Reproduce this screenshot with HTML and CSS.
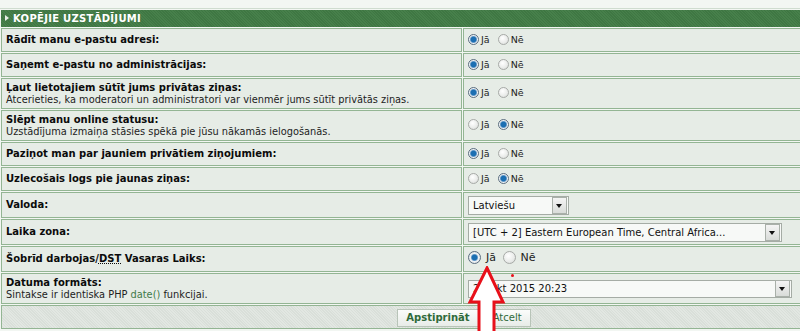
FILE: index.html
```html
<!DOCTYPE html>
<html lang="lv">

<head>
    <meta charset="UTF-8">
    <meta name="viewport" content="width=device-width, initial-scale=1.0">
    <title>Kopējie uzstādījumi</title>
    <link rel="stylesheet" href="styles.css">
</head>

<body>
    <div class="panel">
        <table class="prefs">
            <tr>
                <th colspan="2" class="head"><span class="tri"></span>Kopējie uzstādījumi</th>
            </tr>
            <tr class="row">
                <td class="lbl"><b>Rādīt manu e-pastu adresi:</b></td>
                <td class="val">
                    <label class="opt"><input type="radio" name="viewemail" checked>Jā</label>
                    <label class="opt"><input type="radio" name="viewemail">Nē</label>
                </td>
            </tr>
            <tr class="row">
                <td class="lbl"><b>Saņemt e-pastu no administrācijas:</b></td>
                <td class="val">
                    <label class="opt"><input type="radio" name="massemail" checked>Jā</label>
                    <label class="opt"><input type="radio" name="massemail">Nē</label>
                </td>
            </tr>
            <tr class="row tall">
                <td class="lbl"><b>Ļaut lietotajiem sūtīt jums privātas ziņas:</b><br>
                    <span class="hint">Atcerieties, ka moderatori un administratori var vienmēr jums sūtīt privātās ziņas.</span>
                </td>
                <td class="val">
                    <label class="opt"><input type="radio" name="allowpm" checked>Jā</label>
                    <label class="opt"><input type="radio" name="allowpm">Nē</label>
                </td>
            </tr>
            <tr class="row tall">
                <td class="lbl"><b>Slēpt manu online statusu:</b><br>
                    <span class="hint">Uzstādījuma izmaiņa stāsies spēkā pie jūsu nākamās ielogošanās.</span>
                </td>
                <td class="val">
                    <label class="opt"><input type="radio" name="hideonline">Jā</label>
                    <label class="opt"><input type="radio" name="hideonline" checked>Nē</label>
                </td>
            </tr>
            <tr class="row">
                <td class="lbl"><b>Paziņot man par jauniem privātiem ziņojumiem:</b></td>
                <td class="val">
                    <label class="opt"><input type="radio" name="notifypm" checked>Jā</label>
                    <label class="opt"><input type="radio" name="notifypm">Nē</label>
                </td>
            </tr>
            <tr class="row">
                <td class="lbl"><b>Uzlecošais logs pie jaunas ziņas:</b></td>
                <td class="val">
                    <label class="opt"><input type="radio" name="popuppm">Jā</label>
                    <label class="opt"><input type="radio" name="popuppm" checked>Nē</label>
                </td>
            </tr>
            <tr class="row mid">
                <td class="lbl"><b>Valoda:</b></td>
                <td class="val">
                    <div class="drop lang"><span class="drop-text">Latviešu</span><span class="drop-btn"></span></div>
                </td>
            </tr>
            <tr class="row mid">
                <td class="lbl"><b>Laika zona:</b></td>
                <td class="val">
                    <div class="drop tz"><span class="drop-text">[UTC + 2] Eastern European Time, Central Africa...</span><span class="drop-btn"></span></div>
                </td>
            </tr>
            <tr class="row mid">
                <td class="lbl"><b>Šobrīd darbojas/<abbr title="Daylight Saving Time">DST</abbr> Vasaras Laiks:</b></td>
                <td class="val big">
                    <label class="opt"><input type="radio" name="dst" checked>Jā</label>
                    <label class="opt"><input type="radio" name="dst">Nē</label>
                </td>
            </tr>
            <tr class="row tall">
                <td class="lbl"><b>Datuma formāts:</b><br>
                    <span class="hint">Sintakse ir identiska PHP <a href="#">date()</a> funkcijai.</span>
                </td>
                <td class="val">
                    <div class="drop date"><span class="drop-text">25 Okt 2015 20:23</span><span class="drop-btn"></span></div>
                </td>
            </tr>
            <tr class="foot">
                <td colspan="2">
                    <button class="btn main">Apstiprināt</button>
                    <button class="btn">Atcelt</button>
                </td>
            </tr>
        </table>

        <!-- annotation drawn over the form -->
        <svg class="pointer" width="40" height="70" viewBox="0 0 40 70">
            <path d="M20 2 L36 36 L27 36 L27 72 L12 72 L12 36 L3 36 Z" fill="#fff" stroke="#e8101a" stroke-width="3" stroke-linejoin="miter"/>
        </svg>
        <span class="dot"></span>
    </div>
</body>

</html>
```
FILE: styles.css
```css
body {
    margin: 0;
    background: #f2f6f2;
    font-family: "DejaVu Sans", Verdana, sans-serif;
    color: #111;
}

.panel {
    position: relative;
    height: 331px;
    overflow: hidden;
    padding-top: 8px;
    box-sizing: border-box;
}

/* the form is wider than the window, only its left part shows */
.prefs {
    width: 928px;
    border-collapse: separate;
    border-spacing: 1px;
    border-top: 1px solid #cfdccf;
}

.prefs td {
    box-sizing: border-box;
    border: 1px solid #93b593;
    background: #e6ece6;
    padding: 0 4px;
    vertical-align: middle;
}

.head {
    height: 17px;
    padding: 0 4px;
    text-align: left;
    color: #fff;
    font-size: 10px;
    font-weight: bold;
    text-transform: uppercase;
    letter-spacing: 0.3px;
    background: repeating-linear-gradient(45deg, #47804b 0, #47804b 1px, #3f7743 1px, #3f7743 2px);
}

.tri {
    display: inline-block;
    width: 0;
    height: 0;
    border-left: 4px solid #e8efe8;
    border-top: 3px solid transparent;
    border-bottom: 3px solid transparent;
    margin-right: 4px;
    vertical-align: 1px;
}

.row td {
    height: 24px;
}

.row.mid td {
    height: 26px;
}

.row.tall td {
    height: 31px;
}

.lbl {
    width: 461px;
    font-size: 10px;
    line-height: 12px;
}

.lbl b {
    color: #0b0b0b;
}

abbr {
    text-decoration: underline dotted;
}

.hint {
    font-size: 9.8px;
    line-height: 12px;
    color: #222;
}

.hint a {
    color: #3f7a49;
    text-decoration: none;
}

.val {
    font-size: 9.5px;
    color: #222;
}

.opt {
    display: inline-flex;
    align-items: center;
    margin-right: 5px;
}

.opt input {
    appearance: none;
    width: 11px;
    height: 11px;
    margin: 0 2px 0 0;
    border-radius: 50%;
    border: 1px solid #a7aaa7;
    background: radial-gradient(circle at 40% 35%, #fff 0, #e9ebe9 60%, #cfd2cf 100%);
}

.opt input:checked {
    border-color: #5c6e80;
    background: radial-gradient(circle at 50% 50%, #1c6fb2 0, #1c6fb2 2.5px, #7aa7cf 3.2px, #eef2f5 4px, #d3d7d9 100%);
}

.val.big {
    font-size: 11px;
}

.val.big .opt {
    margin-right: 3px;
}

.val.big .opt input {
    width: 13px;
    height: 13px;
    margin-right: 5px;
}

.drop {
    display: flex;
    align-items: center;
    height: 19px;
    box-sizing: border-box;
    border: 1px solid #a5aca5;
    background: #f7f9f7;
    font-size: 10px;
    color: #111;
}

.drop-text {
    flex: 1;
    padding-left: 4px;
    white-space: nowrap;
    overflow: hidden;
}

.drop-btn {
    width: 13px;
    height: 15px;
    margin-right: 1px;
    border: 1px solid #a9b0a9;
    background: linear-gradient(#f4f4f4, #d9dcd9);
    position: relative;
}

.drop-btn::after {
    content: "";
    position: absolute;
    left: 3px;
    top: 6px;
    border-top: 4px solid #111;
    border-left: 3.5px solid transparent;
    border-right: 3.5px solid transparent;
}

.lang {
    width: 101px;
}

.tz {
    width: 314px;
}

.date {
    width: 324px;
    height: 18px;
}

.foot td {
    height: 24px;
    text-align: center;
    background: repeating-linear-gradient(45deg, #e2e7e2 0, #e2e7e2 1px, #d9dfd9 1px, #d9dfd9 2px);
}

.btn {
    height: 18px;
    padding: 0 8px;
    font-family: "DejaVu Sans", Verdana, sans-serif;
    font-size: 10px;
    color: #2f6a3a;
    border: 1px solid #b8c4b8;
    background: linear-gradient(#fbfcfb, #e8ece8);
    vertical-align: middle;
}

.btn.main {
    font-weight: bold;
}

.pointer {
    position: absolute;
    left: 467px;
    top: 266px;
}

.dot {
    position: absolute;
    left: 511px;
    top: 274px;
    width: 3px;
    height: 3px;
    border-radius: 50%;
    background: #e8101a;
}
```
